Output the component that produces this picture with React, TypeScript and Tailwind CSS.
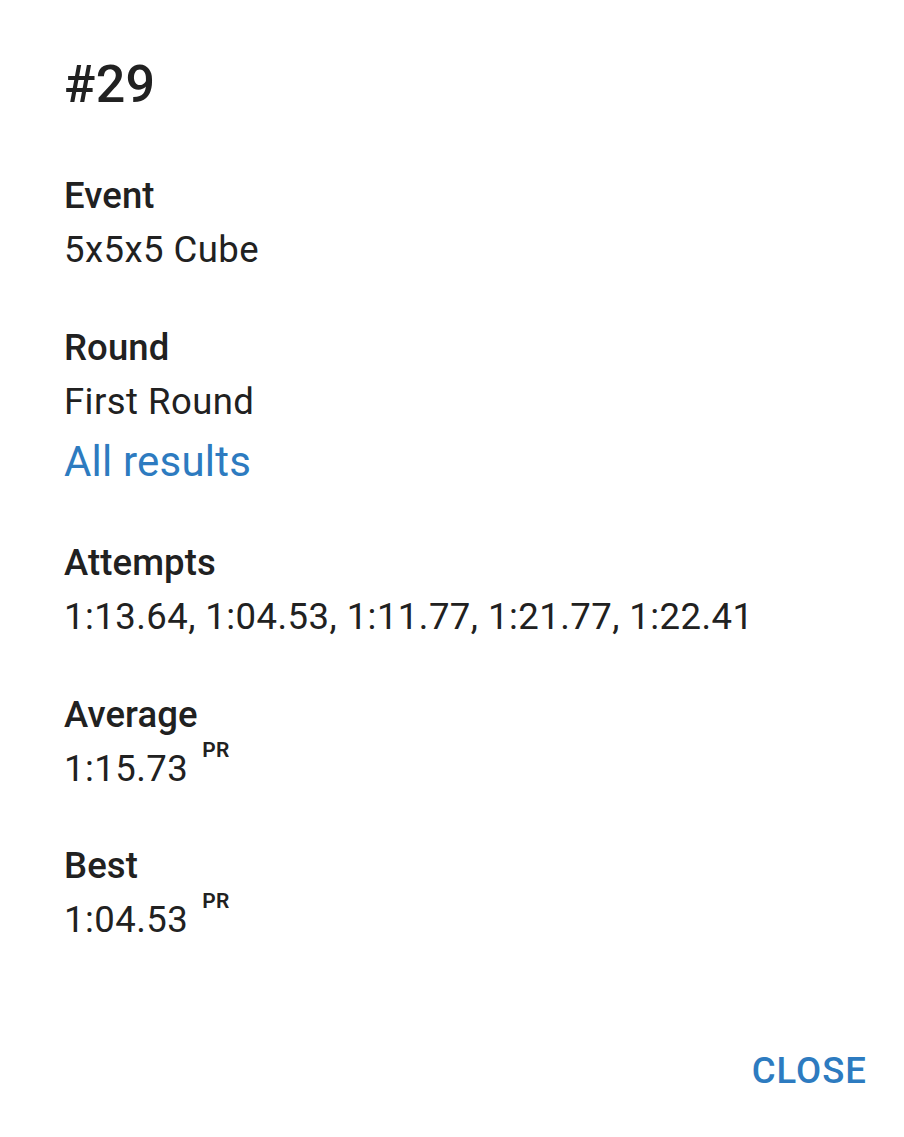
import React from "react";

const sections: { label: string; value: string; pr?: boolean; link?: string }[] = [
  { label: "Event", value: "5x5x5 Cube" },
  { label: "Round", value: "First Round", link: "All results" },
  { label: "Attempts", value: "1:13.64, 1:04.53, 1:11.77, 1:21.77, 1:22.41" },
  { label: "Average", value: "1:15.73", pr: true },
  { label: "Best", value: "1:04.53", pr: true },
];

export default function App() {
  return (
    <div
      className="min-h-[1137px] w-[904px] bg-white text-[#212121] antialiased"
      style={{ fontFamily: "Roboto, 'Noto Sans', Arial, sans-serif" }}
    >
      <div className="px-[64px] pt-[43px]">
        <h2 className="text-[52px] leading-[83px] font-medium tracking-[0.3px]">#29</h2>
        <div className="pt-[41px]">
          {sections.map((s, i) => (
            <div key={s.label} className={i === 0 ? "" : "mt-[42.5px]"}>
              <div className="text-[36.5px] leading-[57px] font-medium tracking-[0.1px]">{s.label}</div>
              <div className="text-[36.5px] leading-[52px] tracking-[0.45px] whitespace-nowrap">
                {s.value}
                {s.pr && (
                  <span className="ml-[14px] inline-block align-[24px] text-[21px] leading-[0] font-semibold">
                    PR
                  </span>
                )}
              </div>
              {s.link && (
                <div className="pt-[3px] text-[42px] leading-[61px] text-[#2d7bc0] tracking-[0.2px]">
                  {s.link}
                </div>
              )}
            </div>
          ))}
        </div>
      </div>
      <div className="mt-[90px] flex justify-end pr-[37px]">
        <button className="pt-[3px] text-[36.5px] leading-[64px] font-medium uppercase tracking-[1px] text-[#2d7bc0]">
          Close
        </button>
      </div>
    </div>
  );
}
